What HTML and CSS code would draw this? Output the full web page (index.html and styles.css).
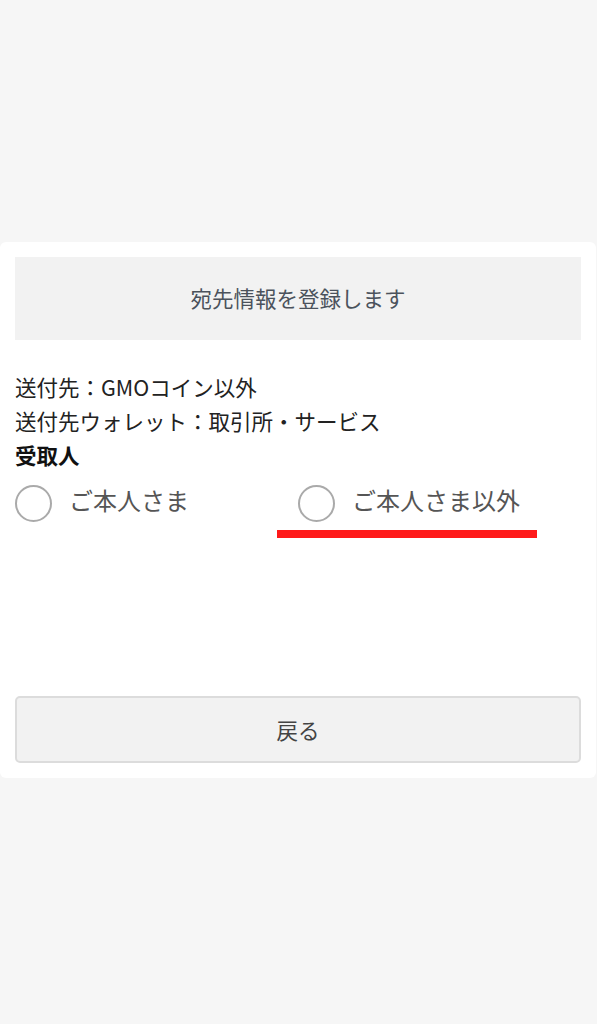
FILE: index.html
```html
<!DOCTYPE html>
<html lang="ja">
<head>
  <meta charset="UTF-8">
  <meta name="viewport" content="width=device-width, initial-scale=1.0">
  <title>宛先情報の登録</title>
  <link rel="stylesheet" href="styles.css">
</head>
<body>
  <div class="card">
    <div class="notice">宛先情報を登録します</div>

    <div class="info">
      <p>送付先：GMOコイン以外</p>
      <p>送付先ウォレット：取引所・サービス</p>
      <p class="label">受取人</p>
    </div>

    <div class="choices">
      <label class="choice">
        <span class="radio"></span>
        <span class="text">ご本人さま</span>
      </label>
      <label class="choice marked">
        <span class="radio"></span>
        <span class="text">ご本人さま以外</span>
        <span class="mark"></span>
      </label>
    </div>

    <button class="back">戻る</button>
  </div>
</body>
</html>
```

FILE: styles.css
```css
body {
  font-family: "Noto Sans CJK JP", "Noto Sans", sans-serif;
  margin: 0;
  padding: 242px 0 0;
  background: #f6f6f6;
  min-height: 100vh;
  box-sizing: border-box;
}

.card {
  background: #fff;
  border-radius: 6px;
  padding: 15px;
  width: 596px;
  box-sizing: border-box;
}

.notice {
  background: #f2f2f2;
  height: 83px;
  display: flex;
  align-items: center;
  justify-content: center;
  color: #4b525c;
  font-size: 21.5px;
  padding-bottom: 2px;
  box-sizing: border-box;
}

.info {
  margin-top: 30px;
  font-size: 21.5px;
  line-height: 34px;
  color: #222;
}

.info p {
  margin: 0;
}

.info .label {
  font-weight: bold;
  color: #111;
}

.choices {
  display: grid;
  grid-template-columns: 1fr 1fr;
  margin-top: 12px;
}

.choice {
  position: relative;
  display: flex;
  align-items: center;
  gap: 17px;
  font-size: 24px;
  color: #555;
  height: 38px;
}

.choice .text {
  margin-bottom: 7px;
}

.radio {
  width: 37px;
  height: 37px;
  border: 2px solid #aaa;
  border-radius: 50%;
  box-sizing: border-box;
  flex-shrink: 0;
}

/* red underline drawn over the screenshot */
.mark {
  position: absolute;
  left: -21px;
  top: 46px;
  width: 260px;
  height: 8px;
  background: #ff1a1a;
}

.back {
  display: block;
  width: 100%;
  height: 67px;
  margin-top: 174px;
  background: #f2f2f2;
  border: 2px solid #dcdcdc;
  border-radius: 5px;
  font-family: inherit;
  font-size: 21.5px;
  color: #444;
}
```
